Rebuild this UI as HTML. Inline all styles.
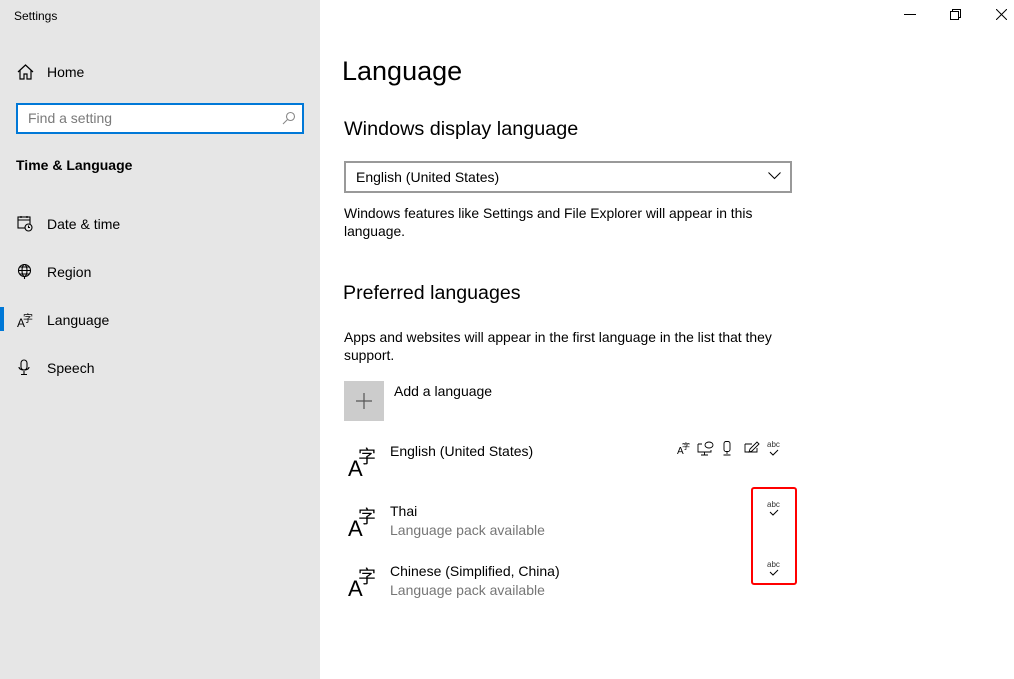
<!DOCTYPE html><html><head><meta charset="utf-8"><style>
*{margin:0;padding:0;box-sizing:border-box}
body{width:1014px;height:679px;position:relative;font-family:"Liberation Sans","Noto Sans CJK SC",sans-serif;color:#000;background:#fff;overflow:hidden}
.side{position:absolute;left:0;top:0;width:320px;height:679px;background:#e6e6e6}
.a{position:absolute;white-space:nowrap}
.ic{position:absolute}
.gray{color:#767676}
</style></head><body>
<div class="side"></div>
<div class="a" style="left:14px;top:9px;font-size:12px">Settings</div>
<svg class="ic" style="left:17px;top:64px" width="17" height="16" viewBox="0 0 17 16" fill="none" stroke="#000" stroke-width="1.2"><path d="M1 8 L8.5 1 L16 8 M3 6.5 V15 H7 V10 H10 V15 H14 V6.5"/></svg>
<div class="a" style="left:47px;top:64px;font-size:14px">Home</div>
<div class="a" style="left:16px;top:103px;width:288px;height:31px;border:2px solid #0078d7;background:#fff"></div>
<div class="a gray" style="left:28px;top:110px;font-size:14px;color:#7a7a7a">Find a setting</div>
<svg class="ic" style="left:282px;top:111px" width="14" height="14" viewBox="0 0 14 14" fill="none" stroke="#888" stroke-width="1.1"><circle cx="8.5" cy="5.5" r="4"/><path d="M5.5 8.5 L1 13"/></svg>
<div class="a" style="left:16px;top:157px;font-size:14px;font-weight:bold">Time &amp; Language</div>
<svg class="ic" style="left:17px;top:215px" width="16" height="17" viewBox="0 0 16 17" fill="none" stroke="#000" stroke-width="1.1"><rect x="1" y="2" width="12" height="11"/><path d="M1 5H13M4 1V3M10 1V3"/><circle cx="11.5" cy="12.5" r="3.5" fill="#e6e6e6"/><path d="M11.5 10.5V12.5H13"/></svg>
<div class="a" style="left:47px;top:216px;font-size:14px">Date &amp; time</div>
<svg class="ic" style="left:17px;top:263px" width="16" height="17" viewBox="0 0 16 17" fill="none" stroke="#000" stroke-width="1.1"><circle cx="7.5" cy="7.5" r="6"/><ellipse cx="7.5" cy="7.5" rx="2.5" ry="6"/><path d="M1.5 7.5H13.5M3 4H12M3 11H12M7.5 13.5V16"/></svg>
<div class="a" style="left:47px;top:264px;font-size:14px">Region</div>
<div class="a" style="left:0;top:307px;width:4px;height:24px;background:#0078d7"></div>
<div class="a" style="left:17px;top:316px;font-size:12px">A<span style="position:absolute;left:6px;top:-6px;font-size:10px">字</span></div>
<div class="a" style="left:47px;top:312px;font-size:14px">Language</div>
<svg class="ic" style="left:18px;top:359px" width="12" height="17" viewBox="0 0 12 17" fill="none" stroke="#000" stroke-width="1.1"><rect x="3" y="1" width="6" height="10" rx="3"/><path d="M1 8C1 12 11 12 11 8M6 12V15M3 15.5H9"/></svg>
<div class="a" style="left:47px;top:360px;font-size:14px">Speech</div>

<svg class="ic" style="left:904px;top:14px" width="12" height="2"><path d="M0 0.5H12" stroke="#000"/></svg>
<svg class="ic" style="left:950px;top:9px" width="11" height="11" fill="none" stroke="#000"><path d="M0.5 2.5H8.5V10.5H0.5Z M2.5 2.5V0.5H10.5V8.5H8.5"/></svg>
<svg class="ic" style="left:996px;top:9px" width="11" height="11" stroke="#000"><path d="M0 0L11 11M11 0L0 11"/></svg>

<div class="a" style="left:342px;top:56px;font-size:27px">Language</div>
<div class="a" style="left:344px;top:118px;font-size:19.8px">Windows display language</div>
<div class="a" style="left:344px;top:161px;width:448px;height:32px;border:2px solid #999"></div>
<div class="a" style="left:356px;top:169px;font-size:14px">English (United States)</div>
<svg class="ic" style="left:768px;top:172px" width="13" height="8" fill="none" stroke="#000"><path d="M0.5 0.5L6.5 6.5L12.5 0.5"/></svg>
<div class="a" style="left:344px;top:204px;font-size:13.9px;line-height:18px">Windows features like Settings and File Explorer will appear in this<br>language.</div>
<div class="a" style="left:343px;top:282px;font-size:19.6px">Preferred languages</div>
<div class="a" style="left:344px;top:328px;font-size:13.9px;line-height:18px">Apps and websites will appear in the first language in the list that they<br>support.</div>
<div class="a" style="left:344px;top:381px;width:40px;height:40px;background:#ccc"></div>
<svg class="ic" style="left:355px;top:392px" width="18" height="18" stroke="#555" stroke-width="1.2"><path d="M9 1V17M1 9H17"/></svg>
<div class="a" style="left:394px;top:383px;font-size:14px">Add a language</div>

<div class="a" style="left:348px;top:456px;font-size:22px">A</div><div class="a" style="left:358px;top:443px;font-size:18px">字</div>
<div class="a" style="left:390px;top:443px;font-size:14px">English (United States)</div>
<div class="a" style="left:348px;top:516px;font-size:22px">A</div><div class="a" style="left:358px;top:503px;font-size:18px">字</div>
<div class="a" style="left:390px;top:503px;font-size:14px">Thai</div>
<div class="a gray" style="left:390px;top:522px;font-size:14px">Language pack available</div>
<div class="a" style="left:348px;top:576px;font-size:22px">A</div><div class="a" style="left:358px;top:563px;font-size:18px">字</div>
<div class="a" style="left:390px;top:563px;font-size:14px">Chinese (Simplified, China)</div>
<div class="a gray" style="left:390px;top:582px;font-size:14px">Language pack available</div>

<div class="a" style="left:677px;top:446px;font-size:10px">A<span style="position:absolute;left:5px;top:-5px;font-size:8px">字</span></div>
<svg class="ic" style="left:697px;top:441px" width="18" height="15" fill="none" stroke="#000" stroke-width="0.9"><path d="M1 3H5M1 3V11H14V9M4 14H11M7.5 11V14"/><ellipse cx="12" cy="4" rx="4" ry="3"/></svg>
<svg class="ic" style="left:722px;top:441px" width="10" height="15" fill="none" stroke="#000" stroke-width="0.9"><rect x="2" y="0.5" width="6" height="10" rx="2"/><path d="M5 11V13M1.5 14H8.5"/></svg>
<svg class="ic" style="left:744px;top:441px" width="16" height="12" fill="none" stroke="#000" stroke-width="0.9"><path d="M1 3H8M1 3V11H13V7"/><path d="M6 8L13 1L15 3L8 10L5 11Z"/></svg>
<div class="a" style="left:767px;top:440px;font-size:8px;color:#333">abc</div>
<svg class="ic" style="left:769px;top:449px" width="10" height="7" fill="none" stroke="#000"><path d="M1 3L4 6L9 1"/></svg>

<div class="a" style="left:751px;top:487px;width:46px;height:98px;border:2.5px solid #f00;border-radius:3px"></div>
<div class="a" style="left:767px;top:500px;font-size:8px;color:#333">abc</div>
<svg class="ic" style="left:769px;top:509px" width="10" height="7" fill="none" stroke="#000"><path d="M1 3L4 6L9 1"/></svg>
<div class="a" style="left:767px;top:560px;font-size:8px;color:#333">abc</div>
<svg class="ic" style="left:769px;top:569px" width="10" height="7" fill="none" stroke="#000"><path d="M1 3L4 6L9 1"/></svg>
</body></html>
